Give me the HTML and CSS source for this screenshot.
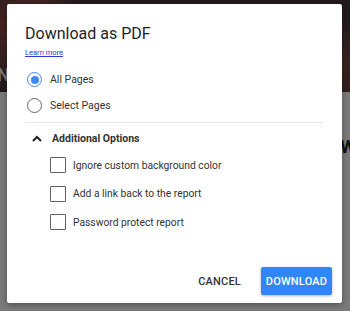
FILE: index.html
```html
<!DOCTYPE html>
<html lang="en">
<head>
    <meta charset="UTF-8">
    <title>Download as PDF</title>
    <link rel="stylesheet" href="styles.css">
</head>
<body>

<div class="page">
    <div class="hero">
        <span class="hero-left">N</span>
    </div>
    <div class="rest">
        <span class="rest-right">W</span>
    </div>
</div>

<div class="overlay">
    <div class="dialog">
        <h1 class="title">Download as PDF</h1>
        <a class="learn" href="#">Learn more</a>

        <div class="radios">
            <label class="radio checked"><span class="dot"></span>All Pages</label>
            <label class="radio"><span class="dot"></span>Select Pages</label>
        </div>

        <div class="divider"></div>

        <div class="more">
            <svg class="chev" width="10" height="7" viewBox="0 0 10 7">
                <path d="M1 6 L5 2 L9 6" fill="none" stroke="#202124" stroke-width="2"/>
            </svg>
            <span>Additional Options</span>
        </div>

        <div class="checks">
            <label class="check"><span class="box"></span>Ignore custom background color</label>
            <label class="check"><span class="box"></span>Add a link back to the report</label>
            <label class="check"><span class="box"></span>Password protect report</label>
        </div>

        <div class="actions">
            <button class="btn cancel">CANCEL</button>
            <button class="btn primary">DOWNLOAD</button>
        </div>
    </div>
</div>

</body>
</html>
```

FILE: styles.css
```css
*{
    margin: 0;
    padding: 0;
    box-sizing: border-box;
}
body{
    width: 350px;
    height: 311px;
    overflow: hidden;
    font-family: Roboto, "Liberation Sans", sans-serif;
    position: relative;
}
.page{
    height: 311px;
}
.hero{
    height: 92px;
    background: radial-gradient(circle at 8% 30%, #5a2a22 0, transparent 18%),
                radial-gradient(circle at 92% 70%, #4a2a20 0, transparent 15%),
                #231a1e;
    position: relative;
}
.hero-left{
    position: absolute;
    left: -3px;
    top: 64px;
    color: #777;
    font-size: 18px;
    font-weight: bold;
}
.rest{
    height: 219px;
    background: #7b7b7b;
    position: relative;
}
.rest-right{
    position: absolute;
    right: -6px;
    top: 44px;
    color: #111;
    font-size: 18px;
    font-weight: bold;
}
.overlay{
    position: absolute;
    left: 0;
    top: 0;
    right: 0;
    bottom: 0;
    padding: 4px 8px 8px 7px;
}
.dialog{
    width: 335px;
    height: 299px;
    background: #fff;
    border-radius: 2px;
    box-shadow: 0 2px 6px rgba(0,0,0,.35);
    padding: 20px 10px 8px 18px;
    display: flex;
    flex-direction: column;
}
.title{
    font-size: 16px;
    font-weight: 400;
    color: #1f1f1f;
    line-height: 20px;
}
.learn{
    font-size: 7.5px;
    color: #2a3bd6;
    margin-top: 4px;
    line-height: 10px;
}
.radios{
    margin-top: 14px;
    display: flex;
    flex-direction: column;
    gap: 11px;
}
.radio{
    display: flex;
    align-items: center;
    gap: 8px;
    font-size: 10.5px;
    color: #333;
    height: 15px;
    margin-left: 2px;
}
.dot{
    width: 15px;
    height: 15px;
    border: 1.5px solid #5f6368;
    border-radius: 50%;
    display: flex;
    align-items: center;
    justify-content: center;
}
.checked .dot{
    border-color: #4285f4;
}
.checked .dot::after{
    content: "";
    width: 8px;
    height: 8px;
    border-radius: 50%;
    background: #4285f4;
}
.divider{
    height: 1px;
    background: #e6e6e6;
    margin: 9px 9px 0 0;
}
.more{
    display: flex;
    align-items: center;
    gap: 10px;
    margin: 9px 0 0 7px;
    font-size: 10.5px;
    font-weight: 700;
    color: #333;
    height: 12px;
}
.checks{
    margin: 13px 0 0 25px;
    display: flex;
    flex-direction: column;
    gap: 12.5px;
}
.check{
    display: flex;
    align-items: center;
    gap: 7px;
    font-size: 10.3px;
    color: #333;
    height: 16px;
}
.box{
    width: 16px;
    height: 16px;
    border: 1.5px solid #5f6368;
    border-radius: 1px;
}
.actions{
    margin-top: auto;
    display: flex;
    justify-content: flex-end;
    align-items: center;
    gap: 20px;
}
.btn{
    font-family: Roboto, "Liberation Sans", sans-serif;
    font-size: 11px;
    font-weight: 500;
    border: none;
    background: none;
    letter-spacing: .2px;
    cursor: pointer;
}
.cancel{
    color: #333;
}
.primary{
    background: #2f86f6;
    color: #fff;
    width: 71px;
    height: 28px;
    border-radius: 2px;
    box-shadow: 0 1px 3px rgba(0,0,0,.3);
}
```
